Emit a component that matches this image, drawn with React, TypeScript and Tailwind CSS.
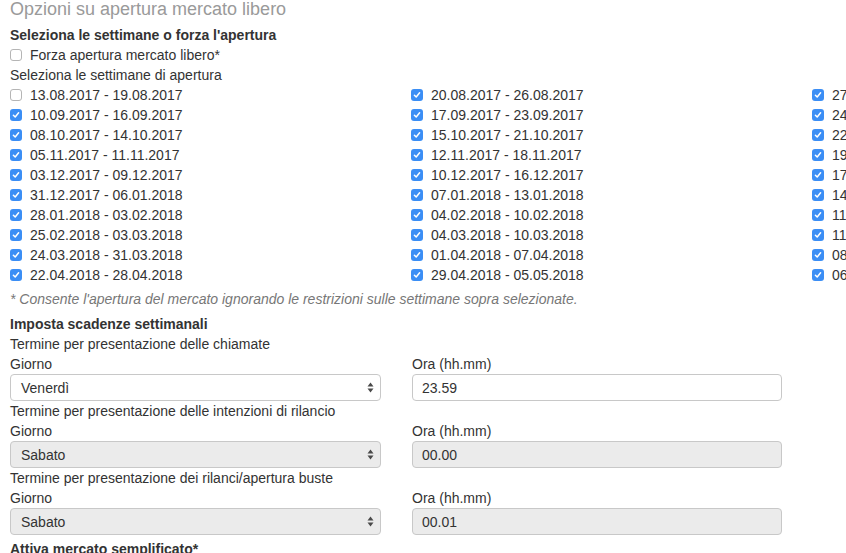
import type { ReactNode } from 'react'

const weeks: [string, boolean][][] = [
  [
    ['13.08.2017 - 19.08.2017', false],
    ['10.09.2017 - 16.09.2017', true],
    ['08.10.2017 - 14.10.2017', true],
    ['05.11.2017 - 11.11.2017', true],
    ['03.12.2017 - 09.12.2017', true],
    ['31.12.2017 - 06.01.2018', true],
    ['28.01.2018 - 03.02.2018', true],
    ['25.02.2018 - 03.03.2018', true],
    ['24.03.2018 - 31.03.2018', true],
    ['22.04.2018 - 28.04.2018', true],
  ],
  [
    ['20.08.2017 - 26.08.2017', true],
    ['17.09.2017 - 23.09.2017', true],
    ['15.10.2017 - 21.10.2017', true],
    ['12.11.2017 - 18.11.2017', true],
    ['10.12.2017 - 16.12.2017', true],
    ['07.01.2018 - 13.01.2018', true],
    ['04.02.2018 - 10.02.2018', true],
    ['04.03.2018 - 10.03.2018', true],
    ['01.04.2018 - 07.04.2018', true],
    ['29.04.2018 - 05.05.2018', true],
  ],
  [
    ['27.08.2017 - 02.09.2017', true],
    ['24.09.2017 - 30.09.2017', true],
    ['22.10.2017 - 28.10.2017', true],
    ['19.11.2017 - 25.11.2017', true],
    ['17.12.2017 - 23.12.2017', true],
    ['14.01.2018 - 20.01.2018', true],
    ['11.02.2018 - 17.02.2018', true],
    ['11.03.2018 - 17.03.2018', true],
    ['08.04.2018 - 14.04.2018', true],
    ['06.05.2018 - 12.05.2018', true],
  ],
]

function Box({ checked }: { checked: boolean }) {
  if (!checked) {
    return <span className="h-[12px] w-[12px] shrink-0 rounded-[3px] border border-[#b5b5b5] bg-white" />
  }
  return (
    <span className="flex h-[12px] w-[12px] shrink-0 items-center justify-center rounded-[3px] bg-[#3b8ef5]">
      <svg width="8" height="8" viewBox="0 0 8 8" fill="none">
        <path d="M1.4 4.2 3.2 6 6.6 1.8" stroke="white" strokeWidth="1.5" strokeLinecap="round" strokeLinejoin="round" />
      </svg>
    </span>
  )
}

function Check({ checked, children }: { checked: boolean; children: ReactNode }) {
  return (
    <div className="flex h-[20px] items-center gap-[8px] whitespace-nowrap">
      <Box checked={checked} />
      <span>{children}</span>
    </div>
  )
}

function Select({ value, disabled }: { value: string; disabled?: boolean }) {
  return (
    <div
      className={`flex h-[27px] items-center justify-between rounded-[4px] border border-[#c8c8c8] pl-[10px] pr-[6px] ${
        disabled ? 'bg-[#ebebeb]' : 'bg-white'
      }`}
    >
      <span>{value}</span>
      <svg width="7" height="11" viewBox="0 0 7 11">
        <path d="M3.5 0.5 6.5 4.5H0.5Z" fill="#4a4a4a" />
        <path d="M3.5 10.5 6.5 6.5H0.5Z" fill="#4a4a4a" />
      </svg>
    </div>
  )
}

function Input({ value, disabled }: { value: string; disabled?: boolean }) {
  return (
    <div
      className={`flex h-[27px] items-center rounded-[4px] border border-[#c8c8c8] px-[9px] ${
        disabled ? 'bg-[#ebebeb]' : 'bg-white'
      }`}
    >
      {value}
    </div>
  )
}

function Deadline({ title, day, time, disabled }: { title: string; day: string; time: string; disabled?: boolean }) {
  return (
    <div>
      <div className="h-[20px] leading-[20px]">{title}</div>
      <div className="flex gap-[31px]">
        <div className="w-[371px]">
          <div className="h-[20px] leading-[20px]">Giorno</div>
          <Select value={day} disabled={disabled} />
        </div>
        <div className="w-[370px]">
          <div className="h-[20px] leading-[20px]">Ora (hh.mm)</div>
          <Input value={time} disabled={disabled} />
        </div>
      </div>
    </div>
  )
}

export default function App() {
  return (
    <div
      className="h-[553px] w-[846px] overflow-hidden bg-white px-[10px] text-[14px] leading-[20px] text-[#333]"
      style={{ fontFamily: '"Liberation Sans", Arial, sans-serif' }}
    >
      <h3 className="-mt-[1px] text-[18px] leading-[20px] text-[#9a9a9a]">Opzioni su apertura mercato libero</h3>

      <div className="mt-[6px] font-bold">Seleziona le settimane o forza l'apertura</div>
      <Check checked={false}>Forza apertura mercato libero*</Check>
      <div>Seleziona le settimane di apertura</div>

      <div className="flex">
        {weeks.map((col, i) => (
          <div key={i} className="w-[401px] shrink-0">
            {col.map(([label, checked]) => (
              <Check key={label} checked={checked}>
                {label}
              </Check>
            ))}
          </div>
        ))}
      </div>

      <p className="mt-[4px] italic text-[#777]">
        * Consente l'apertura del mercato ignorando le restrizioni sulle settimane sopra selezionate.
      </p>

      <div className="mt-[5px] font-bold">Imposta scadenze settimanali</div>
      <Deadline title="Termine per presentazione delle chiamate" day="Venerdì" time="23.59" />
      <Deadline title="Termine per presentazione delle intenzioni di rilancio" day="Sabato" time="00.00" disabled />
      <Deadline title="Termine per presentazione dei rilanci/apertura buste" day="Sabato" time="00.01" disabled />

      <div className="mt-[4px] font-bold">Attiva mercato semplificato*</div>
    </div>
  )
}
